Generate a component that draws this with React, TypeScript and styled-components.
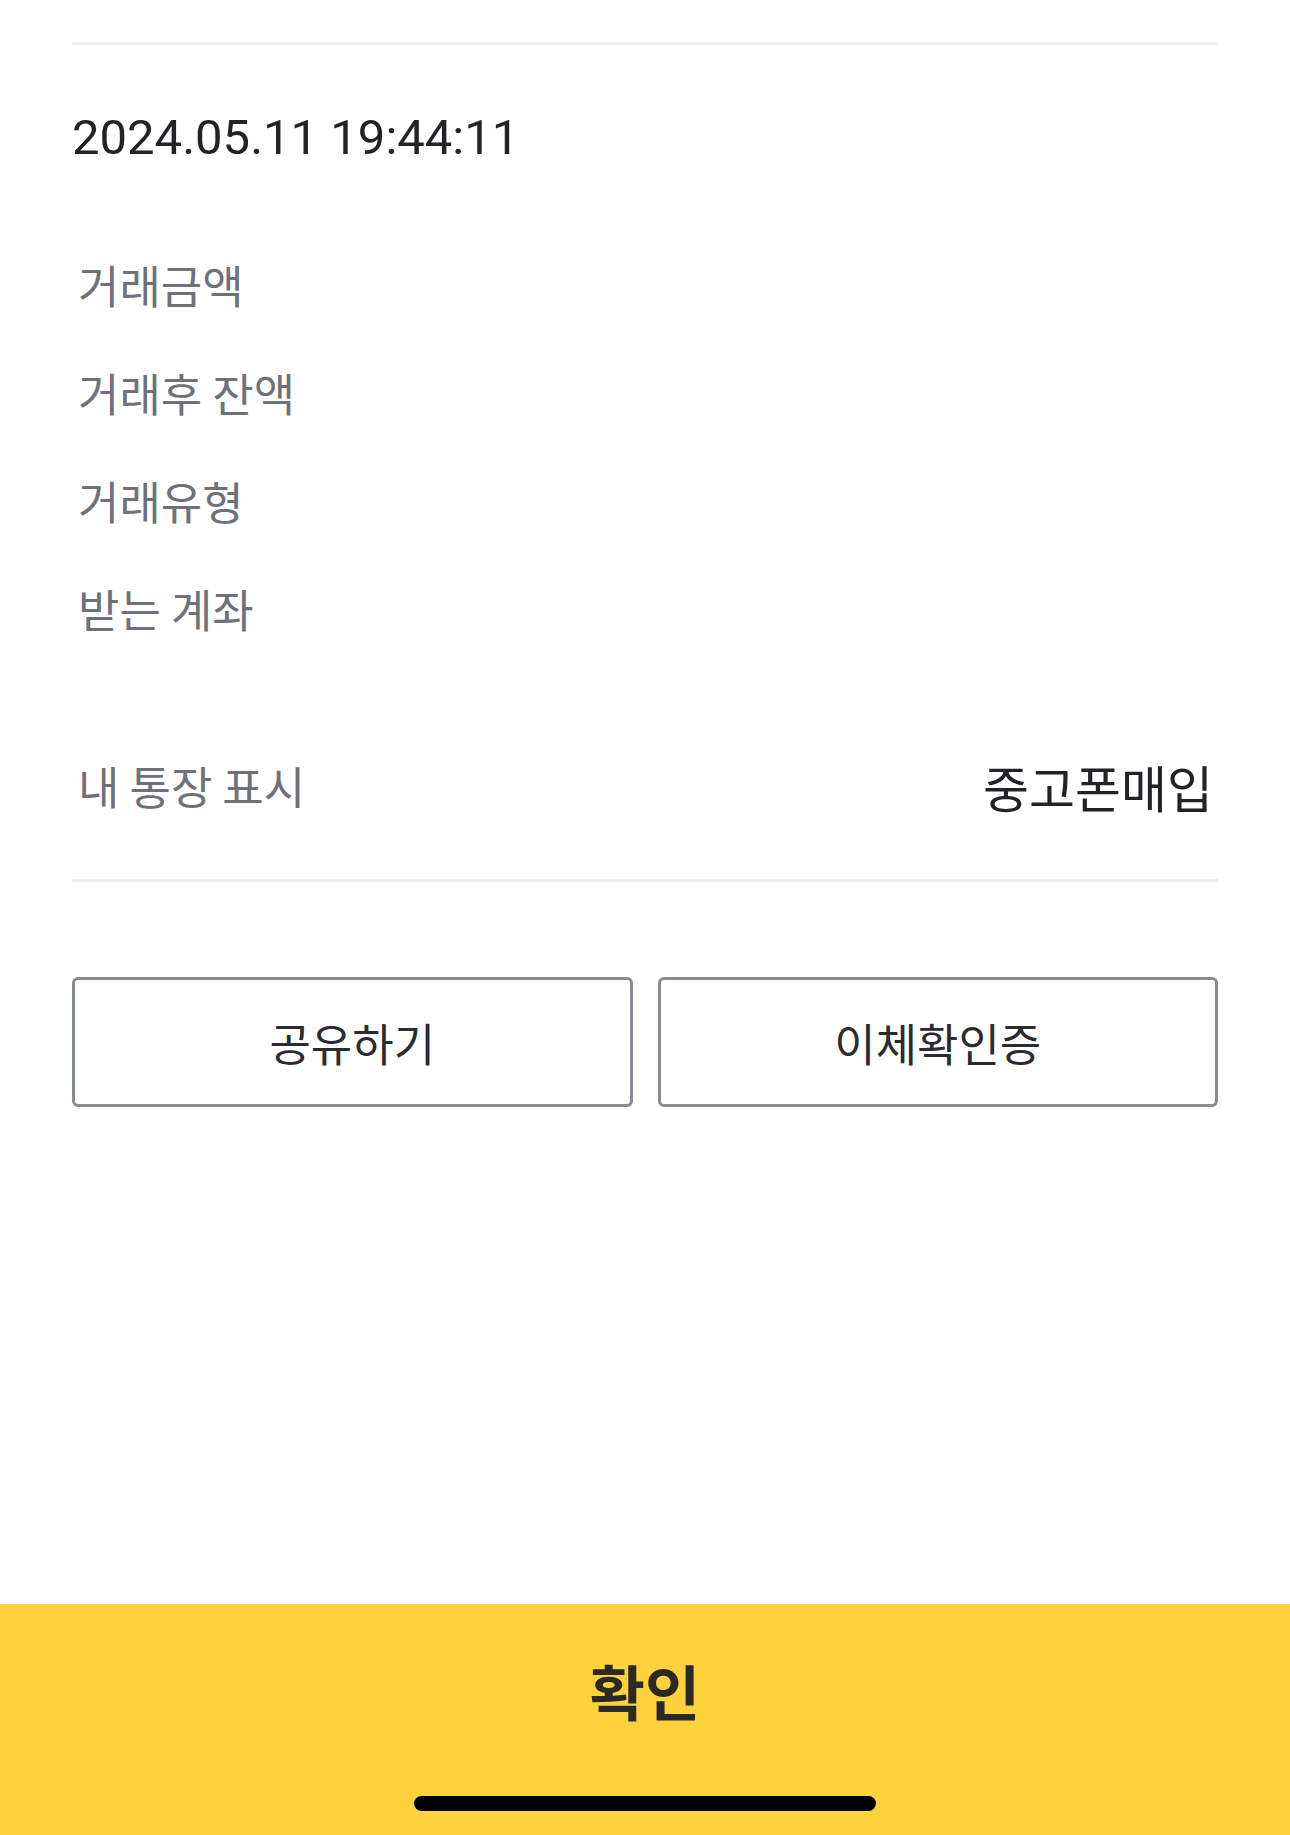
import React from 'react';
import styled, { createGlobalStyle } from 'styled-components';

const GlobalStyle = createGlobalStyle`
  html, body {
    margin: 0;
    padding: 0;
    background: #ffffff;
  }
  body {
    font-family: Roboto, "Noto Sans CJK KR", "Noto Sans", sans-serif;
    -webkit-font-smoothing: antialiased;
  }
  * {
    box-sizing: border-box;
  }
`;

const Page = styled.div`
  min-height: 100vh;
  display: flex;
  flex-direction: column;
  background: #ffffff;
`;

const Content = styled.main`
  flex: 1;
  padding: 0 72px;
  display: flex;
  flex-direction: column;
`;

const Rule = styled.div<{ $top: number }>`
  height: 3px;
  margin-top: ${p => p.$top}px;
  background: #eeeff0;
`;

const DateText = styled.div`
  margin-top: 63px;
  font-family: Roboto, "Noto Sans", sans-serif;
  font-size: 49px;
  line-height: 60px;
  color: #222326;
`;

const DetailList = styled.dl`
  margin: 63px 0 0;
  display: flex;
  flex-direction: column;
`;

const DetailRow = styled.div<{ $top?: number }>`
  height: 108px;
  margin-top: ${p => p.$top ?? 0}px;
  display: flex;
  align-items: center;
  justify-content: space-between;
`;

const Label = styled.dt`
  padding-left: 6px;
  font-family: "Noto Sans CJK KR", sans-serif;
  font-size: 45px;
  line-height: 108px;
  color: #6e7178;
`;

const Value = styled.dd`
  margin: 0;
  padding-right: 5px;
  font-family: "Noto Sans CJK KR", sans-serif;
  font-size: 50px;
  line-height: 100px;
  color: #222326;
`;

const ActionRow = styled.div`
  margin-top: 95px;
  display: flex;
  gap: 25px;
`;

const OutlineButton = styled.button`
  flex: 1;
  height: 130px;
  border: 3px solid #878b92;
  border-radius: 6px;
  background: #ffffff;
  font-family: "Noto Sans CJK KR", sans-serif;
  font-size: 45px;
  color: #2b2c2f;
  cursor: pointer;
`;

const Footer = styled.footer`
  height: 231px;
  padding: 54px 0 24px;
  background: #fdd23a;
  display: flex;
  flex-direction: column;
  align-items: center;
`;

const ConfirmButton = styled.button`
  border: none;
  background: transparent;
  padding: 0;
  font-family: "Noto Sans CJK KR", sans-serif;
  font-size: 60px;
  font-weight: 700;
  line-height: 64px;
  color: #2a2925;
  cursor: pointer;
`;

const HomeIndicator = styled.div`
  margin-top: 74px;
  width: 462px;
  height: 15px;
  border-radius: 8px;
  background: #000000;
`;

const details = ['거래금액', '거래후 잔액', '거래유형', '받는 계좌'];

function App() {
  return (
    <>
      <GlobalStyle />
      <Page>
        <Content>
          <Rule $top={42} />
          <DateText>2024.05.11 19:44:11</DateText>
          <DetailList>
            {details.map(label => (
              <DetailRow key={label}>
                <Label>{label}</Label>
                <Value />
              </DetailRow>
            ))}
            <DetailRow $top={69}>
              <Label>내 통장 표시</Label>
              <Value>중고폰매입</Value>
            </DetailRow>
          </DetailList>
          <Rule $top={39} />
          <ActionRow>
            <OutlineButton>공유하기</OutlineButton>
            <OutlineButton>이체확인증</OutlineButton>
          </ActionRow>
        </Content>
        <Footer>
          <ConfirmButton>확인</ConfirmButton>
          <HomeIndicator />
        </Footer>
      </Page>
    </>
  );
}

export default App;
